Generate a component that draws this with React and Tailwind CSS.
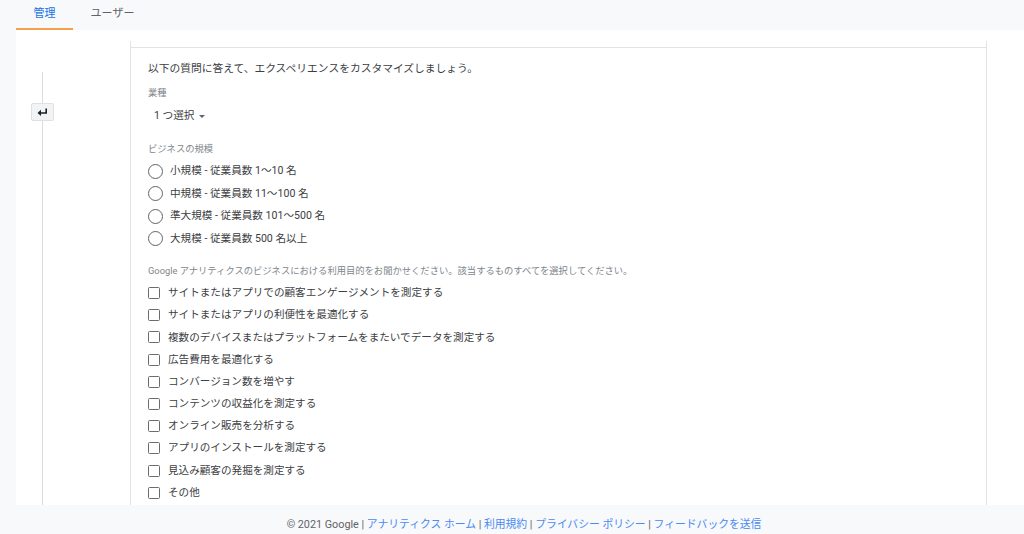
import React from "react";

const sizes = [
  "小規模 - 従業員数 1〜10 名",
  "中規模 - 従業員数 11〜100 名",
  "準大規模 - 従業員数 101〜500 名",
  "大規模 - 従業員数 500 名以上",
];

const purposes = [
  "サイトまたはアプリでの顧客エンゲージメントを測定する",
  "サイトまたはアプリの利便性を最適化する",
  "複数のデバイスまたはプラットフォームをまたいでデータを測定する",
  "広告費用を最適化する",
  "コンバージョン数を増やす",
  "コンテンツの収益化を測定する",
  "オンライン販売を分析する",
  "アプリのインストールを測定する",
  "見込み顧客の発掘を測定する",
  "その他",
];

const BackIcon = () => (
  <svg width="11" height="8" viewBox="0 0 11 8">
    <path d="M0.5 5 L4 1.8 L4 8 Z" fill="#202124" />
    <path d="M3.5 5 H9.2 V0.5" stroke="#202124" strokeWidth="1.6" fill="none" />
  </svg>
);

const FooterLink = ({ children }) => (
  <span className="text-[#4a8af4]">{children}</span>
);

export default function App() {
  return (
    <div className="h-[534px] flex flex-col bg-[#f8f9fa] overflow-hidden font-[Roboto,'Noto_Sans_CJK_JP',sans-serif] text-[#3c4043]">
      {/* tabs */}
      <header className="h-[30px] flex pl-[16px] text-[11px] shrink-0">
        <div className="w-[57px] flex items-center justify-center text-[#1a73e8] border-b-2 border-[#f4a04d] pt-[1px]">
          管理
        </div>
        <div className="w-[79px] flex items-center justify-center text-[#5f6368] pb-[2px]">
          ユーザー
        </div>
      </header>

      {/* main */}
      <main className="flex-1 ml-[16px] bg-white flex min-h-0">
        <div className="w-[114px] shrink-0 pl-[15px]">
          <div className="w-[23px] h-full flex flex-col items-center">
            <div className="w-px h-[42px] shrink-0" />
            <div className="w-px h-[31px] bg-[#dadce0]" />
            <button className="w-[23px] h-[18px] shrink-0 flex items-center justify-center bg-[#f1f3f4] border border-[#e0e0e0] rounded-[2px]">
              <BackIcon />
            </button>
            <div className="w-px flex-1 bg-[#dadce0]" />
          </div>
        </div>

        <section className="w-[857px] shrink-0 mt-[11px] border-x border-[#e3e3e3] flex flex-col">
          <div className="h-[7px] border-b border-[#e3e3e3] shrink-0" />
          <div className="pl-[17px] pt-[9px] flex flex-col">
            <div className="h-[24px] flex items-center text-[10.75px] text-[#3c4043]">
              以下の質問に答えて、エクスペリエンスをカスタマイズしましょう。
            </div>
            <div className="h-[24px] flex items-center text-[9.3px] text-[#80868b]">業種</div>
            <div className="h-[22px] flex items-center pl-[6px] text-[10.6px]">
              1 つ選択
              <span className="ml-[5px] w-0 h-0 border-x-[3px] border-x-transparent border-t-[3.5px] border-t-[#5f6368]" />
            </div>

            <div className="mt-[12px] h-[20px] flex items-center text-[9.3px] text-[#80868b]">
              ビジネスの規模
            </div>
            <div className="mt-[1px] flex flex-col">
              {sizes.map((s) => (
                <label key={s} className="h-[22.5px] flex items-center gap-[7px] text-[10.6px]">
                  <span className="w-[15px] h-[15px] rounded-full border-[1.5px] border-[#5f6368] shrink-0" />
                  {s}
                </label>
              ))}
            </div>

            <div className="mt-[10px] h-[22px] flex items-center text-[9.3px] text-[#80868b]">
              Google アナリティクスのビジネスにおける利用目的をお聞かせください。該当するものすべてを選択してください。
            </div>
            <div className="flex flex-col">
              {purposes.map((p) => (
                <label key={p} className="h-[22.2px] flex items-center gap-[8px] text-[10.6px]">
                  <span className="w-[12px] h-[12px] rounded-[1.5px] border-[1.5px] border-[#6b6b6b] shrink-0" />
                  {p}
                </label>
              ))}
            </div>
          </div>
        </section>
      </main>

      {/* footer */}
      <footer className="h-[29px] shrink-0 flex justify-center pl-[24px] pt-[13px] text-[10.8px] leading-[14px] text-[#5f6368]">
        <span>
          © 2021 Google | <FooterLink>アナリティクス ホーム</FooterLink> |{" "}
          <FooterLink>利用規約</FooterLink> | <FooterLink>プライバシー ポリシー</FooterLink> |{" "}
          <FooterLink>フィードバックを送信</FooterLink>
        </span>
      </footer>
    </div>
  );
}
